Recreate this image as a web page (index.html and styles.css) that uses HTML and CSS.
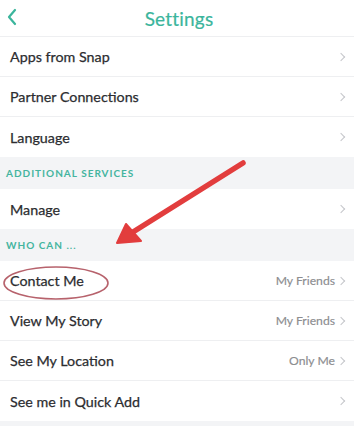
FILE: index.html
```html
<!DOCTYPE html>
<html>
<head>
<meta charset="utf-8">
<link rel="stylesheet" href="styles.css">
</head>
<body>
<div class="screen">
  <header class="topbar">
    <svg class="back" width="12" height="18" viewBox="0 0 12 18"><path d="M9 2 L3 9 L9 16" fill="none" stroke="#3bb59c" stroke-width="2.2" stroke-linecap="round" stroke-linejoin="round"/></svg>
    <h1 class="title">Settings</h1>
  </header>

  <div class="row"><span class="label">Apps from Snap</span><span class="chev"></span></div>
  <div class="row"><span class="label">Partner Connections</span><span class="chev"></span></div>
  <div class="row last"><span class="label">Language</span><span class="chev"></span></div>

  <div class="section">ADDITIONAL SERVICES</div>
  <div class="row last"><span class="label">Manage</span><span class="chev"></span></div>

  <div class="section">WHO CAN ...</div>
  <div class="row"><span class="label">Contact Me</span><span class="value">My Friends</span><span class="chev"></span></div>
  <div class="row"><span class="label">View My Story</span><span class="value">My Friends</span><span class="chev"></span></div>
  <div class="row"><span class="label">See My Location</span><span class="value">Only Me</span><span class="chev"></span></div>
  <div class="row last"><span class="label">See me in Quick Add</span><span class="chev"></span></div>
  <div class="footer"></div>

  <svg class="annot" width="354" height="426" viewBox="0 0 354 426">
    <defs>
      <filter id="sh" x="-20%" y="-20%" width="140%" height="140%">
        <feGaussianBlur stdDeviation="0.7"/>
      </filter>
    </defs>
    <ellipse cx="56" cy="283" rx="52" ry="16" fill="none" stroke="#b7626c" stroke-width="1.6"/>
    <g filter="url(#sh)">
      <line x1="243" y1="163" x2="133" y2="232" stroke="#e23c3e" stroke-width="5.5" stroke-linecap="round"/>
      <polygon points="117,243 126,224 141,241" fill="#e23c3e" stroke="#e23c3e" stroke-width="2" stroke-linejoin="round"/>
    </g>
  </svg>
</div>
</body>
</html>
```
FILE: styles.css
```css
html, body {
  margin: 0;
  padding: 0;
  background: #ffffff;
}
.screen {
  position: relative;
  width: 354px;
  height: 426px;
  overflow: hidden;
  font-family: "Lato", "Noto Sans", sans-serif;
  background: #ffffff;
}
.topbar {
  height: 36px;
  border-bottom: 1px solid #eeeff1;
  display: flex;
  align-items: center;
  justify-content: center;
  position: relative;
}
.back {
  position: absolute;
  left: 6px;
  top: 8px;
}
.title {
  margin: 0;
  font-size: 19px;
  font-weight: 400;
  color: #3bb59c;
  letter-spacing: 0.2px;
  padding-left: 4px;
  -webkit-text-stroke: 0.2px #3bb59c;
}
.row {
  height: 39px;
  border-bottom: 1px solid #eeeff1;
  display: flex;
  align-items: center;
  padding: 0 8px 0 10px;
}
.row.last {
  border-bottom: none;
  height: 40px;
}
.label {
  flex: 1;
  font-size: 14.3px;
  color: #2c2d30;
  font-weight: 400;
  -webkit-text-stroke: 0.25px #2c2d30;
}
.value {
  font-size: 12.2px;
  color: #8c8d90;
  margin-right: 3px;
  -webkit-text-stroke: 0.15px #8c8d90;
}
.chev {
  width: 5px;
  height: 5px;
  border-top: 1.3px solid #c5c6ca;
  border-right: 1.3px solid #c5c6ca;
  transform: rotate(45deg);
  margin-right: 2px;
}
.section {
  height: 32px;
  background: #f3f4f6;
  display: flex;
  align-items: center;
  padding-left: 6px;
  font-size: 10px;
  font-weight: 700;
  letter-spacing: 1px;
  color: #45b49f;
}
.footer {
  height: 10px;
  background: #f3f4f6;
}
.annot {
  position: absolute;
  left: 0;
  top: 0;
  pointer-events: none;
}
```
